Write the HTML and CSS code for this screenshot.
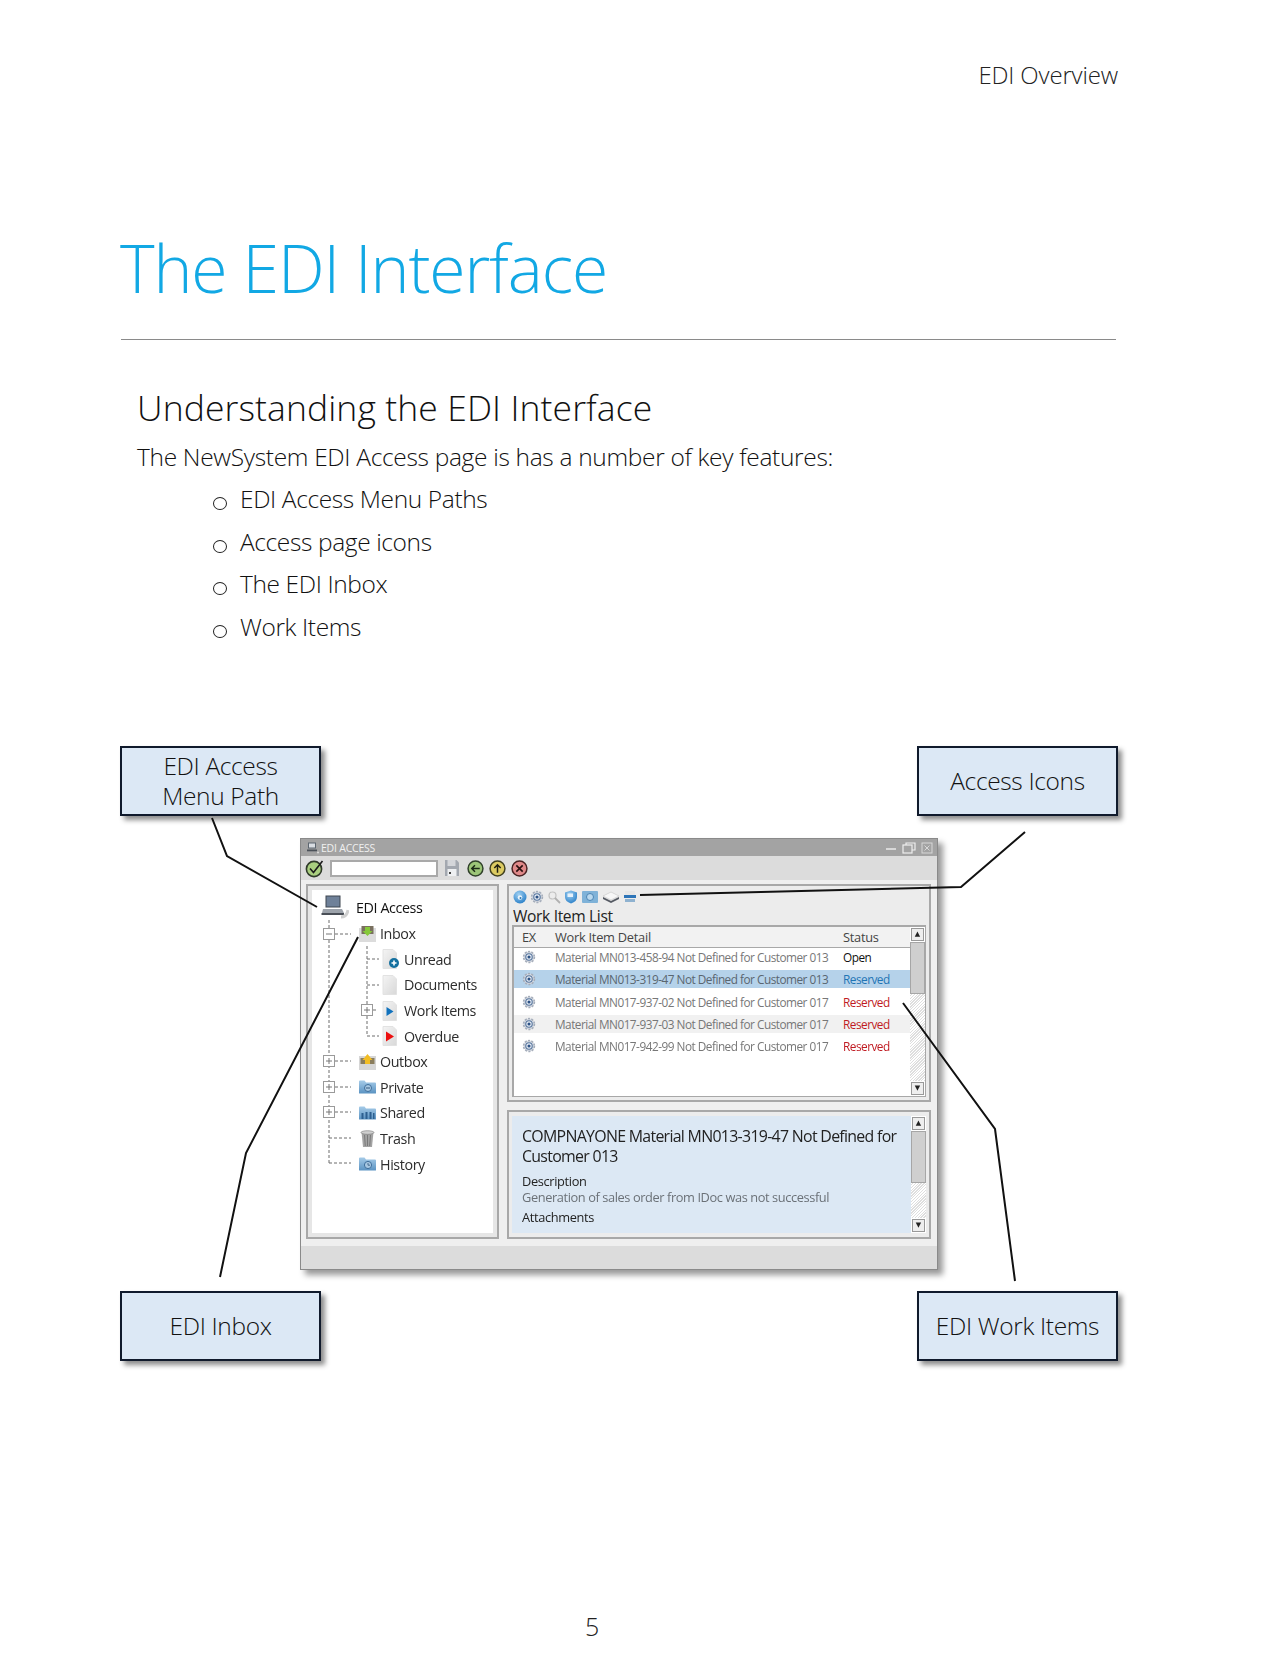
FILE: index.html
```html
<!DOCTYPE html>
<html lang="en">
<head>
<meta charset="utf-8">
<title>EDI Overview</title>
<link rel="stylesheet" href="styles.css">
</head>
<body>
<svg class="defs" width="0" height="0" aria-hidden="true">
  <defs>
    <linearGradient id="gBlue" x1="0" y1="0" x2="0" y2="1"><stop offset="0" stop-color="#a5cbe8"/><stop offset="1" stop-color="#5b93c2"/></linearGradient>
    <linearGradient id="gSheet" x1="0" y1="0" x2="1" y2="1"><stop offset="0" stop-color="#f4f4f4"/><stop offset="1" stop-color="#d8d8d8"/></linearGradient>
    <radialGradient id="gOrb" cx=".4" cy=".3" r=".8"><stop offset="0" stop-color="#9fd0f2"/><stop offset="1" stop-color="#1f78c4"/></radialGradient>
    <symbol id="gear" viewBox="0 0 16 16">
      <circle cx="8" cy="8" r="6.2" fill="#d5dae2" stroke="#a6aebb" stroke-width="1.800" stroke-dasharray="2.400 1.500"/>
      <circle cx="8" cy="8" r="3.700" fill="#e9eef5" stroke="#58779f" stroke-width="1.300"/>
      <circle cx="8" cy="8" r="1.800" fill="#2d5285"/>
    </symbol>
    <symbol id="folder" viewBox="0 0 18 14">
      <path d="M0.5 3V1.5Q0.5 .5 1.5 .5H6L7.5 2.5H16.5Q17.5 2.5 17.5 3.5V13Q17.5 13.5 17 13.5H1Q.5 13.5 .5 13Z" fill="url(#gBlue)"/>
    </symbol>
    <symbol id="sheet" viewBox="0 0 15 20">
      <path d="M1 0.5H11L14.5 4V19.5H1Z" fill="url(#gSheet)" stroke="#e2e2e2"/>
    </symbol>
  </defs>
</svg>

<div class="page">
  <header class="running">EDI Overview</header>
  <h1 class="title">The EDI Interface</h1>
  <hr class="rule">

  <section class="intro">
    <h2 class="subtitle">Understanding the EDI Interface</h2>
    <p class="lead">The NewSystem EDI Access page is has a number of key features:</p>
    <ul class="features">
      <li>EDI Access Menu Paths</li>
      <li>Access page icons</li>
      <li>The EDI Inbox</li>
      <li>Work Items</li>
    </ul>
  </section>

  <section class="diagram">
    <div class="callout-row">
      <div class="callout">EDI Access<br>Menu Path</div>
      <div class="callout">Access Icons</div>
    </div>

    <div class="window">
      <div class="titlebar">
        <svg class="tb-icon" viewBox="0 0 14 12"><rect x="2.5" y="1" width="7" height="5" fill="#d9dde2" stroke="#5d6670"/><rect x="1" y="7.500" width="10" height="1.800" fill="#4b5159"/><circle cx="12" cy="10.500" r="1" fill="#ddd"/></svg>
        <span class="tb-text">EDI ACCESS</span>
        <span class="tb-controls">
          <svg viewBox="0 0 12 12" class="ctl"><path d="M1 7H11" stroke="#efefef" stroke-width="1.4"/></svg>
          <svg viewBox="0 0 14 12" class="ctl ctl-wide"><rect x="1" y="3" width="9" height="8" fill="none" stroke="#efefef" stroke-width="1.2"/><path d="M4 3V1H13V8H10" fill="none" stroke="#efefef" stroke-width="1.2"/></svg>
          <svg viewBox="0 0 12 12" class="ctl"><rect x="1" y="1" width="10" height="10" fill="none" stroke="#d8d8d8"/><path d="M3.5 3.5L8.5 8.5M8.5 3.5L3.5 8.5" stroke="#d8d8d8"/></svg>
        </span>
      </div>

      <div class="toolbar">
        <svg class="tool tool-check" viewBox="0 0 20 20"><circle cx="9" cy="11" r="7.6" fill="#a9cf7f" stroke="#2f3a2a" stroke-width="1.6"/><path d="M5 10.5L8.5 14.5L17.5 3" fill="none" stroke="#1b1b1b" stroke-width="1.6"/></svg>
        <div class="address"></div>
        <svg class="tool-save" viewBox="0 0 16 18"><path d="M1 1H12.5L15 3.5V17H1Z" fill="#a3a8b0"/><rect x="3.500" y="1" width="8" height="6" fill="#d4d6da"/><rect x="3.500" y="10" width="9" height="7" fill="#eef0f2"/><rect x="5" y="13" width="2" height="2" fill="#444"/></svg>
        <svg class="tool tool-first" viewBox="0 0 16 16"><circle cx="8" cy="8" r="7" fill="#9cc578" stroke="#30402a" stroke-width="1.4"/><path d="M12 8H5M7.5 5L4.5 8L7.5 11" fill="none" stroke="#1c2a16" stroke-width="1.4"/></svg>
        <svg class="tool" viewBox="0 0 16 16"><circle cx="8" cy="8" r="7" fill="#dccb62" stroke="#40401f" stroke-width="1.4"/><path d="M8 12V5M5 7.5L8 4.5L11 7.5" fill="none" stroke="#1f1f10" stroke-width="1.4"/></svg>
        <svg class="tool" viewBox="0 0 16 16"><circle cx="8" cy="8" r="7" fill="#e08a8a" stroke="#4a2323" stroke-width="1.4"/><path d="M5 5L11 11M11 5L5 11" stroke="#2a1010" stroke-width="1.5"/></svg>
      </div>

      <div class="workspace">
        <div class="panel panel-tree">
          <div class="tree-box">
            <svg class="tree-lines" viewBox="0 0 181 343">
              <g fill="none" stroke="#6d6d6d" stroke-dasharray="3 2">
                <path d="M17 30V273M17 273H39M17 248H39M23 171H39M23 197H39M23 222H39M23 44H39"/>
                <path d="M55 56V146M55 146H67M55 69H67M55 95H67M61 120H65"/>
              </g>
              <g fill="#fff" stroke="#9a9a9a">
                <rect x="11.5" y="38.5" width="11" height="11"/>
                <rect x="49.5" y="114.5" width="11" height="11"/>
                <rect x="11.5" y="165.5" width="11" height="11"/>
                <rect x="11.5" y="191.5" width="11" height="11"/>
                <rect x="11.5" y="216.5" width="11" height="11"/>
              </g>
              <path d="M14 44H20M52 120H58M55 117V123M14 171H20M17 168V174M14 197H20M17 194V200M14 222H20M17 219V225" stroke="#777"/>
            </svg>

            <div class="node node-root">
              <svg class="ico-root" viewBox="0 0 28 24"><rect x="5" y="1" width="14" height="11" fill="#6f8199" stroke="#3f4650"/><path d="M2 14H21L23 18H1Z" fill="#9da3ab"/><path d="M0.5 18H23V20H0.5Z" fill="#4a4f57"/><path d="M20 22Q26 22 27 15" stroke="#d0d0d0" stroke-width="3" fill="none"/></svg>
              <span>EDI Access</span>
            </div>
            <div class="node lvl1">
              <svg class="ico" viewBox="0 0 18 18"><rect x="0.5" y="3" width="17" height="14" fill="#dcdcdc"/><rect x="3" y="1" width="12" height="8" fill="#79705f"/><path d="M9 11L4 6H6.500V2H11.500V6H14Z" fill="#86c93a"/></svg>
              <span>Inbox</span>
            </div>
            <div class="node lvl2">
              <svg class="ico-sheet" viewBox="0 0 18 20"><use href="#sheet" width="15" height="20"/><circle cx="12" cy="14" r="5" fill="#14709f"/><path d="M12 11.500V16.500M9.500 14H14.500" stroke="#fff" stroke-width="1.6"/></svg>
              <span>Unread</span>
            </div>
            <div class="node lvl2">
              <svg class="ico-sheet" viewBox="0 0 18 20"><use href="#sheet" width="15" height="20"/></svg>
              <span>Documents</span>
            </div>
            <div class="node lvl2">
              <svg class="ico-sheet" viewBox="0 0 18 20"><use href="#sheet" width="15" height="20"/><path d="M4.500 6L11.500 10.500L4.500 15Z" fill="#1172bd"/></svg>
              <span>Work Items</span>
            </div>
            <div class="node lvl2">
              <svg class="ico-sheet" viewBox="0 0 18 20"><use href="#sheet" width="15" height="20"/><path d="M4 5.500L12 10.500L4 15.500Z" fill="#ec1010"/></svg>
              <span>Overdue</span>
            </div>
            <div class="node lvl1">
              <svg class="ico" viewBox="0 0 18 18"><rect x="0.500" y="3" width="17" height="14" fill="#d6d6d6"/><rect x="2" y="5" width="14" height="6" fill="#8a7d5c"/><path d="M9 1L14 7H11.500V11H6.500V7H4Z" fill="#f2bd24"/></svg>
              <span>Outbox</span>
            </div>
            <div class="node lvl1">
              <svg class="ico" viewBox="0 0 18 18"><use href="#folder" y="2" width="18" height="14"/><circle cx="9.500" cy="10" r="3.500" fill="#a8c8e2" stroke="#3f6f9c"/><path d="M7.500 10H11.500" stroke="#33597e"/></svg>
              <span>Private</span>
            </div>
            <div class="node lvl1">
              <svg class="ico" viewBox="0 0 18 18"><use href="#folder" y="2" width="18" height="14"/><path d="M3 15V9H5V15M7 15V8H9V15M11 15V8H13V15M14.500 15V9H16V15" fill="#2d5f8f"/></svg>
              <span>Shared</span>
            </div>
            <div class="node lvl1">
              <svg class="ico" viewBox="0 0 18 18"><path d="M3 2H15L13.500 17H4.500Z" fill="#a4a4a4"/><ellipse cx="9" cy="2.500" rx="6.500" ry="1.800" fill="#d0d0d0" stroke="#777" stroke-width=".6"/><path d="M6 5L6.800 16M9 5V16M12 5L11.200 16" stroke="#6f6f6f" stroke-width=".8"/></svg>
              <span>Trash</span>
            </div>
            <div class="node lvl1">
              <svg class="ico" viewBox="0 0 18 18"><use href="#folder" y="2" width="18" height="14"/><circle cx="9.500" cy="10" r="3.600" fill="#a8c8e2" stroke="#3f6f9c"/><path d="M9.500 8V10.200H11.500" fill="none" stroke="#33597e" stroke-width=".8"/></svg>
              <span>History</span>
            </div>
          </div>
        </div>

        <div class="right-col">
          <div class="panel panel-list">
            <div class="access-icons">
              <svg viewBox="0 0 14 14" class="ai"><circle cx="7" cy="7" r="6.500" fill="url(#gOrb)"/><circle cx="7" cy="7.500" r="2.300" fill="#eaf4fb"/><circle cx="7.500" cy="8" r="1" fill="#2a76b4"/></svg>
              <svg viewBox="0 0 16 16" class="ai"><use href="#gear" width="16" height="16"/></svg>
              <svg viewBox="0 0 14 14" class="ai"><circle cx="5.500" cy="5.500" r="3.500" fill="none" stroke="#c2c2c2" stroke-width="1.200"/><path d="M8 8L13 13" stroke="#b0b0b0" stroke-width="1.800"/></svg>
              <svg viewBox="0 0 14 14" class="ai"><path d="M1 2.500L7 .5L13 2.500V7Q13 11.500 7 13.500Q1 11.500 1 7Z" fill="url(#gOrb)"/><path d="M3.500 3.500H9V7H3.500Z" fill="#e6f1fa"/></svg>
              <svg viewBox="0 0 18 14" class="ai ai-wide"><rect x="1" y="1" width="16" height="12" rx="1" fill="#7fb2d8"/><circle cx="9" cy="7" r="3.500" fill="#b9d8ee" stroke="#4a84b4"/></svg>
              <svg viewBox="0 0 18 14" class="ai ai-wide"><path d="M9 2L17 6L9 10L1 6Z" fill="#f7f7f7" stroke="#c4c4c4" stroke-width=".6"/><path d="M1 7L9 11L17 7L17 9L9 13L1 9Z" fill="#555a63"/></svg>
              <svg viewBox="0 0 14 14" class="ai"><rect x="2" y="1" width="10" height="4" fill="#e6e6e6"/><rect x="1" y="5" width="12" height="3" fill="#2c74b8"/><rect x="2" y="9" width="10" height="3" fill="#8fb2d0"/></svg>
            </div>
            <div class="list-title">Work Item List</div>
            <div class="list-box">
              <div class="list-main">
                <div class="row-head"><span>EX</span><span>Work Item Detail</span><span>Status</span></div>
                <div class="row"><svg class="gear"><use href="#gear"/></svg><span class="detail">Material MN013-458-94 Not Defined for Customer 013</span><span class="st-open">Open</span></div>
                <div class="row row-sel"><svg class="gear"><use href="#gear"/></svg><span class="detail">Material MN013-319-47 Not Defined for Customer 013</span><span class="st-blue">Reserved</span></div>
                <div class="row"><svg class="gear"><use href="#gear"/></svg><span class="detail">Material MN017-937-02 Not Defined for Customer 017</span><span class="st-red">Reserved</span></div>
                <div class="row row-alt"><svg class="gear"><use href="#gear"/></svg><span class="detail">Material MN017-937-03 Not Defined for Customer 017</span><span class="st-red">Reserved</span></div>
                <div class="row"><svg class="gear"><use href="#gear"/></svg><span class="detail">Material MN017-942-99 Not Defined for Customer 017</span><span class="st-red">Reserved</span></div>
              </div>
              <div class="scrollbar">
                <div class="sb-btn">&#9650;</div>
                <div class="sb-thumb sb-thumb-list"></div>
                <div class="sb-track"></div>
                <div class="sb-btn">&#9660;</div>
              </div>
            </div>
          </div>

          <div class="panel panel-detail">
            <div class="detail-box">
              <div class="detail-text">
                <div class="detail-head">COMPNAYONE Material MN013-319-47 Not Defined for Customer 013</div>
                <div class="detail-label">Description</div>
                <div class="detail-desc">Generation of sales order from IDoc was not successful</div>
                <div class="detail-label detail-attach">Attachments</div>
              </div>
              <div class="scrollbar">
                <div class="sb-btn">&#9650;</div>
                <div class="sb-thumb sb-thumb-detail"></div>
                <div class="sb-track"></div>
                <div class="sb-btn">&#9660;</div>
              </div>
            </div>
          </div>
        </div>
      </div>
      <div class="statusbar"></div>
    </div>

    <div class="callout-row callout-row-bottom">
      <div class="callout">EDI Inbox</div>
      <div class="callout">EDI Work Items</div>
    </div>

    <svg class="connectors" viewBox="0 747 1277 620">
      <g fill="none" stroke="#111" stroke-width="2">
        <path d="M212 819L227 857L317 908"/>
        <path d="M220 1278L246 1154L358 938"/>
        <path d="M1025 833L961 888L640 896"/>
        <path d="M903 1004L995 1130L1015 1282"/>
      </g>
    </svg>
  </section>

  <footer class="page-num">5</footer>
</div>
</body>
</html>
```
FILE: styles.css
```css
* { box-sizing: border-box; }
html, body { margin: 0; padding: 0; background: #fff; }
body { font-family: "Open Sans", "Liberation Sans", sans-serif; color: #111; }
.defs { position: absolute; }

.page { width: 1277px; height: 1661px; display: flex; flex-direction: column; overflow: hidden; }

.running { margin: 58px 159px 0 0; text-align: right; font-size: 24px; line-height: 34px; font-weight: 300; letter-spacing: -0.15px; color: #222; }

.title { margin: 133px 0 0 120px; font-size: 66px; line-height: 84px; font-weight: 300; letter-spacing: -1.1px; color: #12a8e4; }

.rule { margin: 30px 161px 0 121px; width: 995px; height: 1px; border: 0; background: #8a8a8a; }

.intro { padding-left: 137px; }
.subtitle { margin: 43px 0 0; font-size: 35.5px; line-height: 48px; font-weight: 300; letter-spacing: 0.1px; color: #111; }
.lead { margin: 5px 0 0; font-size: 24.5px; line-height: 42px; font-weight: 300; letter-spacing: -0.32px; color: #111; }
.features { margin: 0; padding: 0 0 0 103px; list-style: none; }
.features li { position: relative; font-size: 24.5px; line-height: 42.6px; font-weight: 300; letter-spacing: -0.38px; color: #111; }
.features li::before { content: ""; position: absolute; left: -27px; top: 19px; width: 12px; height: 11px; border: 1.3px solid #222; border-radius: 50%; }

.diagram { position: relative; margin-top: 98px; height: 614px; }

.callout-row { display: flex; justify-content: space-between; width: 998px; margin-left: 120px; }
.callout-row-bottom { margin-top: 21px; }
.callout { width: 201px; height: 70px; display: flex; align-items: center; justify-content: center; text-align: center; background: #dce8f5; border: 2px solid #101a2c; box-shadow: 4px 4px 5px rgba(0, 0, 0, .45); font-size: 24.5px; line-height: 30px; font-weight: 300; letter-spacing: -0.35px; color: #111; }

.window { width: 638px; height: 432px; margin: 22px 0 0 300px; background: #dcdcdc; border: 1px solid #8a8a8a; box-shadow: 5px 5px 6px rgba(0, 0, 0, .4); display: flex; flex-direction: column; filter: blur(.25px); }

.titlebar { height: 17px; background: #a3a3a3; display: flex; align-items: center; padding: 0 4px 0 5px; flex: none; }
.tb-icon { width: 14px; height: 12px; flex: none; }
.tb-text { margin-left: 1px; font-size: 10.5px; font-weight: 400; letter-spacing: -0.22px; color: #f0f0f0; }
.tb-controls { margin-left: auto; display: flex; align-items: center; gap: 5px; }
.ctl { width: 12px; height: 12px; }
.ctl-wide { width: 14px; }

.toolbar { height: 24px; flex: none; display: flex; align-items: center; padding-left: 4px; }
.tool { width: 17px; height: 17px; flex: none; margin-right: 5px; }
.tool-check { width: 20px; height: 20px; margin-right: 5px; }
.address { width: 108px; height: 17px; background: #fff; border: 2px solid #a9a9a9; margin-right: 6px; }
.tool-save { width: 16px; height: 18px; margin-right: 7px; flex: none; }

.workspace { flex: none; background: #efefef; height: 366px; padding: 4px 6px 7px 5px; display: flex; gap: 8px; }
.panel { border: 2px solid #a8a8a8; background: #e6e6e6; }
.panel-tree { width: 193px; height: 355px; padding: 4px; }
.tree-box { position: relative; height: 100%; background: #fff; padding-top: 4px; }
.tree-lines { position: absolute; left: 0; top: 0; width: 181px; height: 343px; }
.node { position: relative; height: 25.6px; display: flex; align-items: center; font-size: 14.3px; letter-spacing: -0.4px; color: #2d2d2d; }
.node-root { color: #111; padding-left: 9px; margin-bottom: 1px; }
.node-root span { margin-left: 7px; }
.ico-root { width: 28px; height: 24px; flex: none; }
.lvl1 { padding-left: 46px; }
.lvl2 { padding-left: 70px; }
.ico { width: 19px; height: 18px; flex: none; margin-right: 3px; }
.ico-sheet { width: 18px; height: 20px; flex: none; margin-right: 4px; }

.right-col { width: 424px; display: flex; flex-direction: column; gap: 8px; }
.panel-list { height: 218px; padding: 0 3px 3px; background: #ececec; }
.access-icons { height: 22px; display: flex; align-items: center; padding: 0 0 0 1px; gap: 3px; }
.ai { width: 14px; height: 14px; flex: none; }
.ai-wide { width: 18px; }
.list-title { height: 16px; line-height: 16px; font-size: 15.6px; letter-spacing: -0.35px; color: #222; padding-left: 1px; }
.list-box { height: 172px; margin-top: 1px; background: #fff; border: 2px solid #a8a8a8; border-width: 2px 1px 1px 2px; display: flex; }
.list-main { flex: 1; min-width: 0; }
.row-head, .row { display: grid; grid-template-columns: 41px 288px 1fr; align-items: center; }
.row-head > :first-child, .row > :first-child { justify-self: start; margin-left: 8px; }
.row-head { height: 21px; background: #f2f2f2; border-bottom: 1px solid #a8a8a8; font-size: 12.8px; letter-spacing: -0.25px; color: #444; }
.row { height: 18px; margin-bottom: 4.1px; font-size: 11.8px; letter-spacing: -0.5px; color: #777; }
.row-sel { background: #b5d2ea; color: #5a6670; }
.row-alt { background: #f1f1f1; }
.gear { width: 14px; height: 14px; }
.st-open { color: #111; }
.st-blue { color: #1f75b5; }
.st-red { color: #c01b22; }

.scrollbar { width: 15px; flex: none; display: flex; flex-direction: column; background: #fff; }
.sb-btn { height: 13px; flex: none; margin: 1px; border: 1px solid #999; background: #eee; font-size: 7px; line-height: 11px; text-align: center; color: #222; font-family: "DejaVu Sans", sans-serif; }
.sb-thumb { flex: none; background: #cfcfcf; border: 1px solid #a6a6a6; }
.sb-thumb-list { height: 52px; }
.sb-thumb-detail { height: 52px; }
.sb-track { flex: 1; background: repeating-linear-gradient(135deg, #fff 0 1px, #dedede 1px 2px); }

.panel-detail { height: 129px; padding: 4px 3px; background: #ececec; }
.detail-box { height: 100%; background: #dce8f4; display: flex; }
.detail-text { flex: 1; min-width: 0; padding: 10px 0 0 10px; color: #111; }
.detail-head { font-size: 15.9px; line-height: 20px; letter-spacing: -0.7px; width: 385px; color: #222; }
.detail-label { margin-top: 7px; font-size: 12.8px; line-height: 16px; letter-spacing: -0.35px; color: #222; }
.detail-desc { font-size: 12.8px; line-height: 16px; letter-spacing: -0.4px; color: #6b7177; }
.detail-attach { margin-top: 4px; }

.statusbar { flex: 1; background: #dcdcdc; }

.connectors { position: absolute; left: 0; top: 0; width: 1277px; height: 620px; pointer-events: none; }

.page-num { margin: auto 0 0 0; padding: 0 0 20px 585px; font-size: 25px; line-height: 30px; font-weight: 300; color: #222; }
```
